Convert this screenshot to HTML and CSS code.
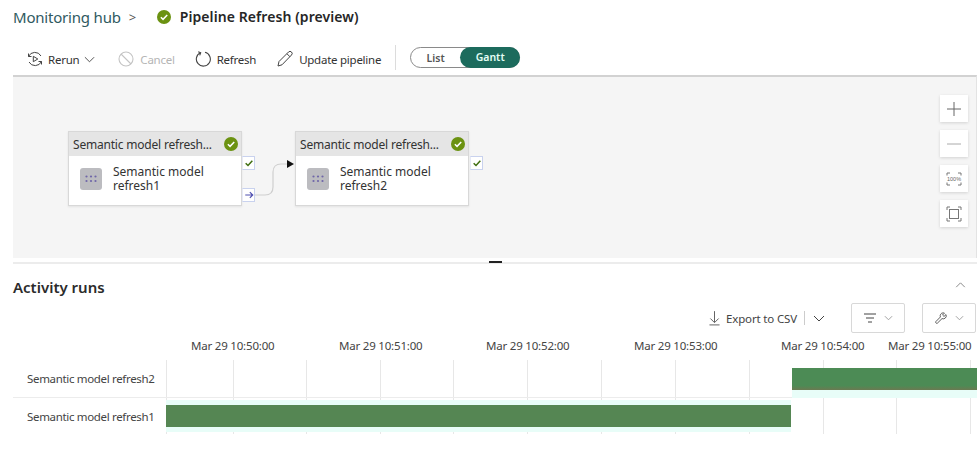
FILE: index.html
```html
<!DOCTYPE html>
<html lang="en">
<head>
<meta charset="utf-8">
<title>Pipeline Refresh (preview)</title>
<link rel="stylesheet" href="styles.css">
</head>
<body>
<div class="page">
  <header class="crumbs">
    <span class="crumb-link">Monitoring hub</span>
    <span class="crumb-sep">&gt;</span>
    <svg class="status status-lg" viewBox="0 0 16 16"><circle cx="8" cy="8" r="8" fill="#6b9211"/><path d="M4.4 8.3l2.5 2.4 4.8-5" fill="none" stroke="#fff" stroke-width="1.7"/></svg>
    <h1 class="crumb-title">Pipeline Refresh (preview)</h1>
  </header>

  <nav class="toolbar">
    <button class="tool tool-rerun">
      <svg class="ico" viewBox="0 0 16 16" fill="none" stroke="#444" stroke-width="1"><path d="M1.500 5.500A7 7 0 0 1 14 5M14.500 10.500A7 7 0 0 1 2 11"/><path d="M1.500 2.500v3h3M14.500 13.500v-3h-3"/><path d="M6.300 5.300l4.500 2.700-4.500 2.700z"/></svg>
      <span>Rerun</span>
      <svg class="chev" viewBox="0 0 12 7" fill="none" stroke="#444"><path d="M1 1l5 5 5-5"/></svg>
    </button>
    <button class="tool tool-disabled">
      <svg class="ico" viewBox="0 0 16 16" fill="none" stroke="#c4c4c4" stroke-width="1.100"><circle cx="8" cy="8" r="7"/><path d="M3 3l10 10"/></svg>
      <span>Cancel</span>
    </button>
    <button class="tool">
      <svg class="ico" viewBox="0 0 16 16" fill="none" stroke="#444" stroke-width="1.100"><path d="M5.500 1.700A7 7 0 1 0 10 1.300"/><path d="M3.200 0.800l2.500 1-1 2.600"/></svg>
      <span>Refresh</span>
    </button>
    <button class="tool tool-last">
      <svg class="ico" viewBox="0 0 16 16" fill="none" stroke="#444" stroke-width="1"><path d="M1 15l1-4.500L11.500 1a1.800 1.800 0 0 1 3 3L5 13.800z"/><path d="M10 2.800l3 3"/></svg>
      <span>Update pipeline</span>
    </button>
    <span class="tool-divider"></span>
    <div class="toggle">
      <span class="toggle-off">List</span>
      <span class="toggle-on">Gantt</span>
    </div>
  </nav>

  <section class="canvas">
    <article class="node node-a">
      <div class="node-head"><span class="node-title">Semantic model refresh...</span>
        <svg class="status" viewBox="0 0 16 16"><circle cx="8" cy="8" r="8" fill="#6b9211"/><path d="M4.400 8.300l2.500 2.400 4.800-5" fill="none" stroke="#fff" stroke-width="1.700"/></svg></div>
      <div class="node-body">
        <svg class="tile" viewBox="0 0 22 22"><rect width="22" height="22" rx="3" fill="#bcbcc0"/><g fill="#6f66a8"><circle cx="6.500" cy="8.500" r="1.100"/><circle cx="11" cy="8.500" r="1.100"/><circle cx="15.500" cy="8.500" r="1.100"/><circle cx="6.500" cy="13" r="1.100"/><circle cx="11" cy="13" r="1.100"/><circle cx="15.500" cy="13" r="1.100"/></g></svg>
        <span class="node-name">Semantic model refresh1</span>
      </div>
    </article>
    <span class="port port-a-ok"><svg viewBox="0 0 12 12" fill="none" stroke="#3f6e10" stroke-width="1.800"><path d="M2 6.300l2.800 2.700L10 3.200"/></svg></span>
    <span class="port port-a-next"><svg viewBox="0 0 12 12" fill="none" stroke="#4f4fb0" stroke-width="1.400"><path d="M1.500 6h9M7 2.500L10.500 6 7 9.500"/></svg></span>
    <svg class="wire" viewBox="0 0 40 36" fill="none"><path d="M0 33h10c6 0 8-3 8-8V10c0-5 3-8 8-8h6" stroke="#cfcfcf" stroke-width="1.200"/><path d="M32 -2l7 4-7 4z" fill="#111"/></svg>
    <article class="node node-b">
      <div class="node-head"><span class="node-title">Semantic model refresh...</span>
        <svg class="status" viewBox="0 0 16 16"><circle cx="8" cy="8" r="8" fill="#6b9211"/><path d="M4.400 8.300l2.500 2.400 4.800-5" fill="none" stroke="#fff" stroke-width="1.700"/></svg></div>
      <div class="node-body">
        <svg class="tile" viewBox="0 0 22 22"><rect width="22" height="22" rx="3" fill="#bcbcc0"/><g fill="#6f66a8"><circle cx="6.500" cy="8.500" r="1.100"/><circle cx="11" cy="8.500" r="1.100"/><circle cx="15.500" cy="8.500" r="1.100"/><circle cx="6.500" cy="13" r="1.100"/><circle cx="11" cy="13" r="1.100"/><circle cx="15.500" cy="13" r="1.100"/></g></svg>
        <span class="node-name">Semantic model refresh2</span>
      </div>
    </article>
    <span class="port port-b-ok"><svg viewBox="0 0 12 12" fill="none" stroke="#3f6e10" stroke-width="1.800"><path d="M2 6.300l2.800 2.700L10 3.200"/></svg></span>

    <div class="zoom-stack">
      <button class="zoom-btn"><svg viewBox="0 0 14 14" fill="none" stroke="#666"><path d="M0 7h14M7 0v14"/></svg></button>
      <button class="zoom-btn"><svg viewBox="0 0 14 14" fill="none" stroke="#aaa"><path d="M0 7h14"/></svg></button>
      <button class="zoom-btn"><svg viewBox="0 0 14 14" fill="none" stroke="#777"><path d="M0 3.500V1h3M11 1h3v2.500M0 10.500V13h3M11 13h3v-2.500"/><text x="7" y="9" font-size="5.500" text-anchor="middle" fill="#666" stroke="none" font-family="Liberation Sans">100%</text></svg></button>
      <button class="zoom-btn"><svg viewBox="0 0 14 14" fill="none" stroke="#777"><path d="M0 3V0h3M11 0h3v3M0 11v3h3M11 14h3v-3"/><rect x="2.500" y="2.500" width="9" height="9"/></svg></button>
    </div>
  </section>

  <div class="splitter"><span class="grip"></span></div>

  <section class="runs">
    <div class="runs-head">
      <h2 class="runs-title">Activity runs</h2>
      <svg class="collapse" viewBox="0 0 12 7" fill="none" stroke="#777"><path d="M1 6l5-5 5 5"/></svg>
    </div>
    <div class="runs-tools">
      <svg class="export-ico" viewBox="0 0 12 16" fill="none" stroke="#555"><path d="M6 0v12M1.500 8L6 12.500 10.500 8M0.500 15h11"/></svg>
      <span class="export-label">Export to CSV</span>
      <span class="export-div"></span>
      <svg class="export-chev" viewBox="0 0 12 7" fill="none" stroke="#444"><path d="M1 1l5 5 5-5"/></svg>
      <button class="box-btn box-first">
        <svg class="box-ico" viewBox="0 0 14 10" fill="none" stroke="#444"><path d="M1 1h12M3 5h8M5 9h4"/></svg>
        <svg class="box-chev" viewBox="0 0 10 6" fill="none" stroke="#999"><path d="M1 1l4 4 4-4"/></svg>
      </button>
      <button class="box-btn">
        <svg class="box-ico" viewBox="0 0 14 14" fill="none" stroke="#444"><path d="M9.500 1a3.500 3.500 0 0 0-3.200 4.800L1 11.200a1.300 1.300 0 0 0 1.800 1.800l5.400-5.300A3.500 3.500 0 0 0 12.800 3L10.500 5.200 8.800 3.500 11 1.300A3.500 3.500 0 0 0 9.500 1z"/></svg>
        <svg class="box-chev" viewBox="0 0 10 6" fill="none" stroke="#999"><path d="M1 1l4 4 4-4"/></svg>
      </button>
    </div>
    <div class="axis">
      <span class="tick" style="left:191px">Mar 29 10:50:00</span>
      <span class="tick" style="left:339px">Mar 29 10:51:00</span>
      <span class="tick" style="left:486px">Mar 29 10:52:00</span>
      <span class="tick" style="left:634px">Mar 29 10:53:00</span>
      <span class="tick" style="left:781px">Mar 29 10:54:00</span>
      <span class="tick" style="left:888px">Mar 29 10:55:00</span>
    </div>
    <div class="gantt">
      <div class="gridlines">
        <i style="left:153px"></i><i style="left:220px"></i><i style="left:293px"></i><i style="left:367px"></i><i style="left:440px"></i><i style="left:514px"></i><i style="left:588px"></i><i style="left:662px"></i><i style="left:736px"></i><i style="left:810px"></i><i style="left:883px"></i><i style="left:957px"></i>
      </div>
      <div class="row row-top">
        <span class="row-label">Semantic model refresh2</span>
        <div class="track"><span class="bar bar-late" style="left:626px;width:185px"></span></div>
      </div>
      <div class="row">
        <span class="row-label">Semantic model refresh1</span>
        <div class="track"><span class="bar bar-early" style="left:0;width:625px"></span></div>
      </div>
    </div>
  </section>
</div>
</body>
</html>
```
FILE: styles.css
```css
* { box-sizing: border-box; }
html, body { margin: 0; padding: 0; background: #fff; }
body { width: 980px; height: 454px; overflow: hidden; font-family: "Noto Sans", "Open Sans", sans-serif; color: #333; }
button { font: inherit; color: inherit; background: none; border: 0; padding: 0; }
svg { display: block; }

.page { width: 977px; display: flex; flex-direction: column; }

.crumbs { height: 33px; padding: 0 0 0 13px; display: flex; align-items: center; }
.crumb-link { font-size: 15px; color: #2f5a5f; letter-spacing: -0.2px; }
.crumb-sep { font-size: 13px; color: #555; margin: 0 0 0 8px; width: 28px; }
.status { width: 14px; height: 14px; flex: none; }
.status-lg { width: 14px; height: 14px; }
.crumb-title { margin: 0 0 0 9px; font-size: 14px; font-weight: 600; color: #262626; letter-spacing: 0.08px; }

.toolbar { height: 42px; padding: 14px 0 0 27px; display: flex; align-items: flex-start; }
.tool { height: 24px; display: flex; align-items: center; gap: 6px; font-size: 11.500px; letter-spacing: -0.25px; color: #333; margin-right: 21px; white-space: nowrap; }
.tool-rerun { gap: 5px; margin-right: 23px; }
.tool-disabled { margin-right: 20px; }
.tool-last { margin-right: 14px; }
.tool-disabled { color: #b5b5b5; }
.ico { width: 16px; height: 16px; flex: none; }
.chev { width: 11px; height: 7px; }
.tool-divider { width: 1px; height: 25px; background: #dcdcdc; margin: -2px 14px 0 0; }
.toggle { width: 110px; height: 21px; border: 1px solid #8a8a8a; border-radius: 11px; display: flex; align-items: center; font-size: 10.500px; font-weight: 600; }
.toggle-off { width: 49px; text-align: center; color: #555; }
.toggle-on { flex: 1; height: 21px; margin: -1px -1px -1px 0; line-height: 21px; text-align: center; background: #1c6b5d; color: #e4fff6; border-radius: 11px; }

.canvas { position: relative; margin-left: 13px; height: 183px; background: #f5f5f5; border-top: 2px solid #d2d2d2; border-right: 1px solid #e3e3e3; }
.node { position: absolute; top: 54px; width: 174px; height: 75px; background: #fff; border: 1px solid #d8d8d8; box-shadow: 0 1px 2px rgba(0,0,0,.08); }
.node-a { left: 55px; }
.node-b { left: 282px; }
.node-head { height: 24px; background: #e5e5e5; display: flex; align-items: center; justify-content: space-between; padding: 0 3px 0 4px; }
.node-title { font-size: 12px; letter-spacing: -0.2px; color: #333; white-space: nowrap; }
.node-body { display: flex; align-items: center; padding: 9px 0 0 11px; gap: 11px; }
.tile { width: 22px; height: 22px; flex: none; }
.node-name { font-size: 12px; line-height: 14px; width: 110px; color: #333; }

.port { position: absolute; width: 13px; height: 14px; background: #fff; border: 1px solid #c9d2ee; border-left-color: #e6e9f6; display: flex; align-items: center; justify-content: center; }
.port svg { width: 10px; height: 10px; }
.port-a-ok { left: 229px; top: 79px; }
.port-a-next { left: 229px; top: 111px; }
.port-b-ok { left: 457px; top: 79px; }
.wire { position: absolute; left: 242px; top: 85px; width: 40px; height: 36px; overflow: visible; }

.zoom-stack { position: absolute; left: 927px; top: 18px; display: flex; flex-direction: column; gap: 8px; }
.zoom-btn { width: 28px; height: 27px; background: #fff; box-shadow: 0 1px 3px rgba(0,0,0,.14); display: flex; align-items: center; justify-content: center; }
.zoom-btn svg { width: 14px; height: 14px; overflow: visible; }

.splitter { position: relative; margin: 4px 0 0 13px; height: 2px; background: #ececec; }
.grip { position: absolute; left: 476px; top: -1px; width: 13px; height: 2px; background: #222; }

.runs { padding-left: 13px; }
.runs-head { height: 39px; display: flex; align-items: center; justify-content: space-between; padding: 6px 11px 0 0; }
.runs-title { margin: 0; font-size: 15px; font-weight: 600; color: #2b2b2b; }
.collapse { width: 11px; height: 6px; margin-top: -4px; }
.runs-tools { height: 30px; padding-right: 1px; display: flex; align-items: center; justify-content: flex-end; }
.export-ico { width: 11px; height: 15px; }
.export-label { font-size: 11.500px; letter-spacing: -0.15px; color: #444; margin-left: 6px; }
.export-div { width: 1px; height: 14px; background: #ccc; margin: 0 8px 0 7px; }
.export-chev { width: 12px; height: 7px; }
.box-btn { width: 54px; height: 30px; border: 1px solid #d8d8d8; border-radius: 2px; margin-left: 17px; display: flex; align-items: center; justify-content: center; gap: 7px; }
.box-first { margin-left: 26px; }
.box-ico { width: 14px; height: 12px; }
.box-chev { width: 9px; height: 6px; }

.axis { position: relative; height: 27px; margin-left: -13px; font-size: 11.500px; letter-spacing: -0.2px; color: #444; }
.tick { position: absolute; top: 5px; white-space: nowrap; }

.gantt { position: relative; height: 74px; }
.gridlines i { position: absolute; top: 0; bottom: 0; width: 1px; background: #e7e7e7; }
.row { position: relative; height: 36px; display: flex; align-items: center; }
.row-top { height: 38px; border-bottom: 1px solid #ececec; }
.row-label { width: 153px; padding-left: 14px; font-size: 11.500px; letter-spacing: -0.33px; color: #444; white-space: nowrap; }
.track { position: relative; flex: 1; height: 100%; }
.bar { position: absolute; height: 22px; }
.bar-late { top: 8px; background: linear-gradient(#4c8b55 80%, #6b7a52); box-shadow: 0 8px 0 #e8fdf8; }
.bar-early { top: 7px; background: #558653; box-shadow: 0 5px 0 #e8fdf8, 0 -5px 0 #e8fdf8; }
```
